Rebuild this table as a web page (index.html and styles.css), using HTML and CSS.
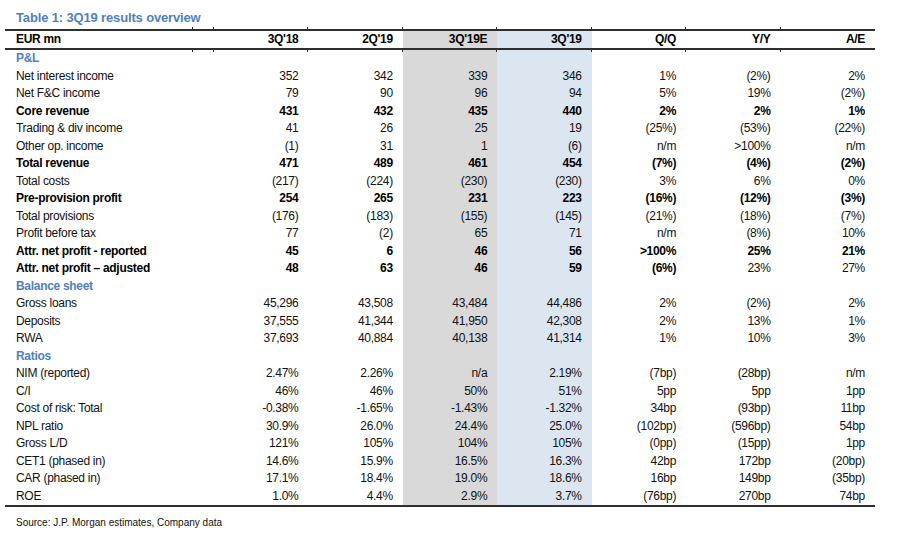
FILE: index.html
```html
<!DOCTYPE html>
<html>
<head>
<meta charset="utf-8">
<link rel="stylesheet" href="styles.css">
</head>
<body>
<div class="page">
  <h1 class="title">Table 1: 3Q19 results overview</h1>
  <table class="results">
    <colgroup>
      <col class="c-label"><col class="c-gap"><col class="c-num"><col class="c-num"><col class="c-num est"><col class="c-num act"><col class="c-num"><col class="c-num"><col class="c-num">
    </colgroup>
    <thead>
      <tr>
        <th class="lbl">EUR mn</th><th class="tick"></th><th class="tick">3Q'18</th><th class="tick">2Q'19</th><th class="tick g">3Q'19E</th><th class="tick b">3Q'19</th><th class="tick">Q/Q</th><th class="tick">Y/Y</th><th class="tick">A/E</th>
      </tr>
    </thead>
    <tbody>
      <tr class="sec"><td class="lbl">P&amp;L</td><td></td><td></td><td></td><td class="g"></td><td class="b"></td><td></td><td></td><td></td></tr>
      <tr><td class="lbl">Net interest income</td><td></td><td>352</td><td>342</td><td class="g">339</td><td class="b">346</td><td>1%</td><td>(2%)</td><td>2%</td></tr>
      <tr><td class="lbl">Net F&amp;C income</td><td></td><td>79</td><td>90</td><td class="g">96</td><td class="b">94</td><td>5%</td><td>19%</td><td>(2%)</td></tr>
      <tr class="bold"><td class="lbl">Core revenue</td><td></td><td>431</td><td>432</td><td class="g">435</td><td class="b">440</td><td>2%</td><td>2%</td><td>1%</td></tr>
      <tr><td class="lbl">Trading &amp; div income</td><td></td><td>41</td><td>26</td><td class="g">25</td><td class="b">19</td><td>(25%)</td><td>(53%)</td><td>(22%)</td></tr>
      <tr><td class="lbl">Other op. income</td><td></td><td>(1)</td><td>31</td><td class="g">1</td><td class="b">(6)</td><td>n/m</td><td>&gt;100%</td><td>n/m</td></tr>
      <tr class="bold"><td class="lbl">Total revenue</td><td></td><td>471</td><td>489</td><td class="g">461</td><td class="b">454</td><td>(7%)</td><td>(4%)</td><td>(2%)</td></tr>
      <tr><td class="lbl">Total costs</td><td></td><td>(217)</td><td>(224)</td><td class="g">(230)</td><td class="b">(230)</td><td>3%</td><td>6%</td><td>0%</td></tr>
      <tr class="bold"><td class="lbl">Pre-provision profit</td><td></td><td>254</td><td>265</td><td class="g">231</td><td class="b">223</td><td>(16%)</td><td>(12%)</td><td>(3%)</td></tr>
      <tr><td class="lbl">Total provisions</td><td></td><td>(176)</td><td>(183)</td><td class="g">(155)</td><td class="b">(145)</td><td>(21%)</td><td>(18%)</td><td>(7%)</td></tr>
      <tr><td class="lbl">Profit before tax</td><td></td><td>77</td><td>(2)</td><td class="g">65</td><td class="b">71</td><td>n/m</td><td>(8%)</td><td>10%</td></tr>
      <tr class="bold"><td class="lbl">Attr. net profit - reported</td><td></td><td>45</td><td>6</td><td class="g">46</td><td class="b">56</td><td>&gt;100%</td><td>25%</td><td>21%</td></tr>
      <tr class="bold"><td class="lbl">Attr. net profit – adjusted</td><td></td><td>48</td><td>63</td><td class="g">46</td><td class="b">59</td><td>(6%)</td><td class="reg">23%</td><td class="reg">27%</td></tr>
      <tr class="sec"><td class="lbl">Balance sheet</td><td></td><td></td><td></td><td class="g"></td><td class="b"></td><td></td><td></td><td></td></tr>
      <tr><td class="lbl">Gross loans</td><td></td><td>45,296</td><td>43,508</td><td class="g">43,484</td><td class="b">44,486</td><td>2%</td><td>(2%)</td><td>2%</td></tr>
      <tr><td class="lbl">Deposits</td><td></td><td>37,555</td><td>41,344</td><td class="g">41,950</td><td class="b">42,308</td><td>2%</td><td>13%</td><td>1%</td></tr>
      <tr><td class="lbl">RWA</td><td></td><td>37,693</td><td>40,884</td><td class="g">40,138</td><td class="b">41,314</td><td>1%</td><td>10%</td><td>3%</td></tr>
      <tr class="sec"><td class="lbl">Ratios</td><td></td><td></td><td></td><td class="g"></td><td class="b"></td><td></td><td></td><td></td></tr>
      <tr><td class="lbl">NIM (reported)</td><td></td><td>2.47%</td><td>2.26%</td><td class="g">n/a</td><td class="b">2.19%</td><td>(7bp)</td><td>(28bp)</td><td>n/m</td></tr>
      <tr><td class="lbl">C/I</td><td></td><td>46%</td><td>46%</td><td class="g">50%</td><td class="b">51%</td><td>5pp</td><td>5pp</td><td>1pp</td></tr>
      <tr><td class="lbl">Cost of risk: Total</td><td></td><td>-0.38%</td><td>-1.65%</td><td class="g">-1.43%</td><td class="b">-1.32%</td><td>34bp</td><td>(93bp)</td><td>11bp</td></tr>
      <tr><td class="lbl">NPL ratio</td><td></td><td>30.9%</td><td>26.0%</td><td class="g">24.4%</td><td class="b">25.0%</td><td>(102bp)</td><td>(596bp)</td><td>54bp</td></tr>
      <tr><td class="lbl">Gross L/D</td><td></td><td>121%</td><td>105%</td><td class="g">104%</td><td class="b">105%</td><td>(0pp)</td><td>(15pp)</td><td>1pp</td></tr>
      <tr><td class="lbl">CET1 (phased in)</td><td></td><td>14.6%</td><td>15.9%</td><td class="g">16.5%</td><td class="b">16.3%</td><td>42bp</td><td>172bp</td><td>(20bp)</td></tr>
      <tr><td class="lbl">CAR (phased in)</td><td></td><td>17.1%</td><td>18.4%</td><td class="g">19.0%</td><td class="b">18.6%</td><td>16bp</td><td>149bp</td><td>(35bp)</td></tr>
      <tr class="last"><td class="lbl">ROE</td><td></td><td>1.0%</td><td>4.4%</td><td class="g">2.9%</td><td class="b">3.7%</td><td>(76bp)</td><td>270bp</td><td>74bp</td></tr>
    </tbody>
  </table>
  <p class="source">Source: J.P. Morgan estimates, Company data</p>
</div>
</body>
</html>
```
FILE: styles.css
```css
html, body {
  margin: 0;
  padding: 0;
  background: #ffffff;
}

.page {
  width: 900px;
  height: 534px;
  padding: 9px 0 0 5px;
  box-sizing: border-box;
  font-family: "Liberation Sans", Arial, sans-serif;
  color: #111111;
}

.title {
  margin: 0 0 0 11px;
  height: 20px;
  font-size: 13px;
  line-height: 17px;
  font-weight: bold;
  letter-spacing: -0.15px;
  color: #4f81bd;
}

.results {
  border-collapse: collapse;
  table-layout: fixed;
  width: 870px;
  font-size: 12px;
  letter-spacing: -0.3px;
}

.c-label { width: 188px; }
.c-gap { width: 21px; }
.c-num { width: 94.43px; }

.results th,
.results td {
  padding: 0 10px 0 0;
  text-align: right;
  white-space: nowrap;
  overflow: visible;
}

.results th {
  position: relative;
  height: 17px;
  line-height: 17px;
  font-weight: bold;
  color: #000000;
  border-top: 2px solid #2e2e2e;
  border-bottom: 2px solid #2e2e2e;
}

.results td {
  height: 17.5px;
  line-height: 17.5px;
}

.results .lbl {
  text-align: left;
  padding: 0 0 0 11px;
}

.results .g { background: #d9d9d9; }
.results .b { background: #dce6f1; }

.sec .lbl {
  color: #4f81bd;
  font-weight: bold;
}

.bold td { font-weight: bold; color: #000000; }
.bold td.reg { font-weight: normal; color: #111111; }

.last td { border-bottom: 2px solid #2e2e2e; }

.tick::before,
.tick::after {
  content: "";
  position: absolute;
  left: -1px;
  width: 1px;
  height: 2px;
  background: #2e2e2e;
}
.tick::before { top: -4px; }
.tick::after { bottom: -4px; }

.source {
  margin: 10px 0 0 11px;
  font-size: 10px;
  color: #111111;
}
```
